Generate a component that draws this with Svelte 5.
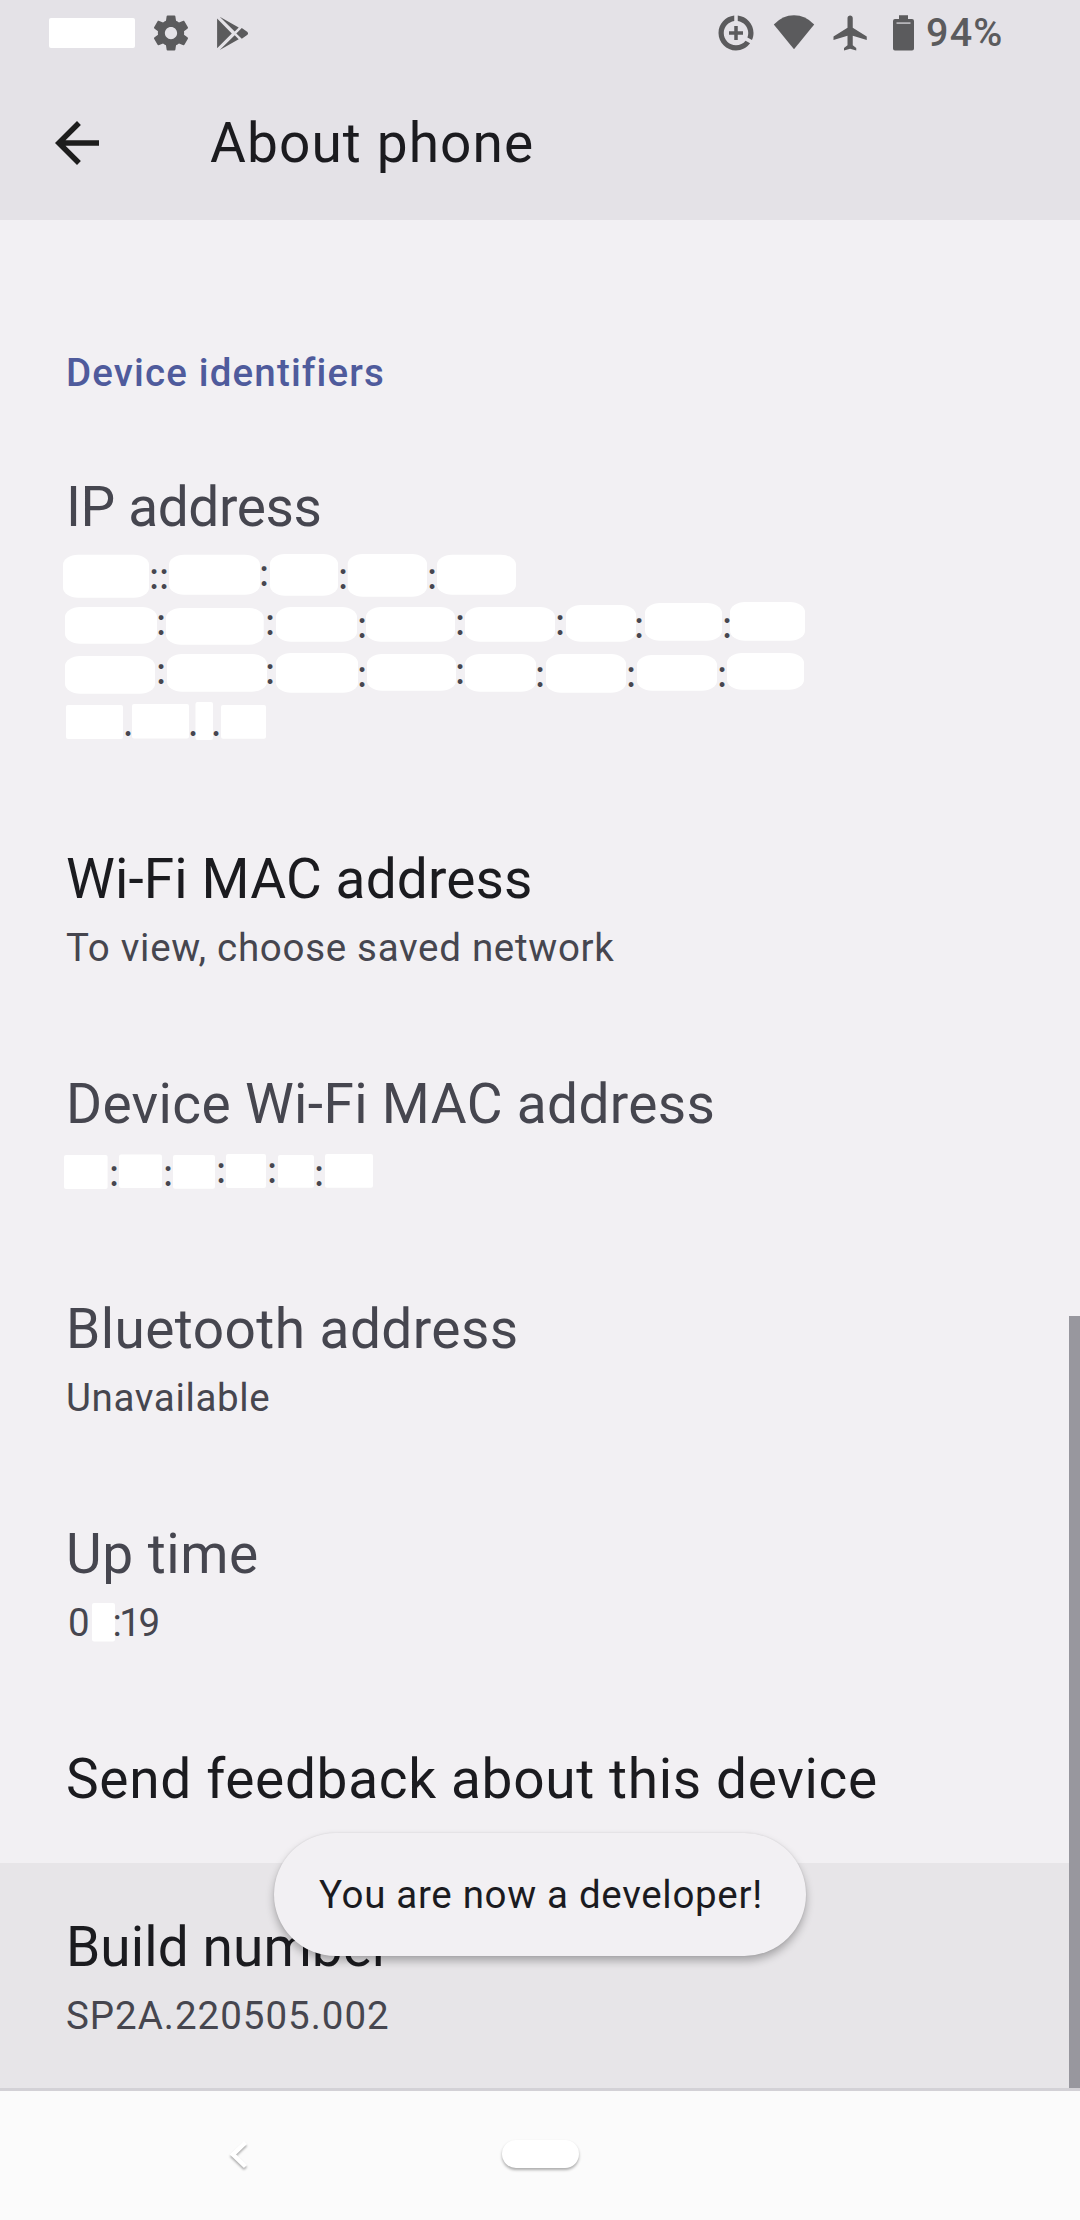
<script>
  // Masks are [x, y, width, height, rounded]; marks are [text, x, baseline],
  // both measured inside the summary area of their row.
  const ipMasks = [
    [63, 4.7, 86, 43, 1], [169, 4.7, 91, 40, 1], [270, 4, 68, 41.7, 1], [347.7, 4, 79.3, 42.7, 1], [437, 4.7, 79, 40, 1],
    [65, 57, 92, 36.7, 1], [166, 58, 97.7, 36.7, 1], [276, 57, 81, 34.7, 1], [366, 57, 89, 34.7, 1],
    [465, 57, 90, 34.7, 1], [566, 55, 70, 36.7, 1], [645, 53, 77, 37.7, 1], [730, 52, 75, 38.7, 1],
    [65, 106, 90, 37.7, 1], [167, 104, 100, 37.7, 1], [276, 103, 82, 39.7, 1], [367, 104, 89, 36.7, 1],
    [465, 104, 71, 37.7, 1], [546, 104, 80, 38.7, 1], [637, 105, 80, 35.7, 1], [727, 103, 77, 36.7, 1],
    [66, 155, 57, 34, 0], [132, 154, 57, 34.5, 0], [195.5, 152, 17.5, 38, 0], [221, 155, 45, 33.7, 0]
  ];
  const colons = (xs, low) => xs.map(([x, raised]) => [':', x, raised ? low - 3 : low]);
  const ipMarks = [
    ...colons([[154, 0], [164, 0], [264, 1], [343, 0], [432, 0]], 39),
    ...colons([[161, 1], [270, 1], [362, 0], [460, 1], [560, 1], [639, 0], [727, 0]], 88),
    ...colons([[161, 1], [270, 1], [362, 0], [460, 1], [540, 0], [631, 0], [722, 0]], 137),
    ['.', 128, 186], ['.', 193, 186], ['.', 216, 186]
  ];
  const macMasks = [
    [64, 8, 43.6, 34, 0], [119, 7.5, 43, 33.5, 0], [173, 8, 42, 33.7, 0],
    [226, 7, 40, 34, 0], [278, 8, 36, 32.7, 0], [325, 7, 48, 33.7, 0]
  ];
  const macMarks = colons([[114, 0], [168, 0], [221, 1], [272, 1], [319, 0]], 39);
  const timeMasks = [[92, 6, 23, 38.5, 0]];
  const timeMarks = [['0', 77.5, 39], [':19', 135, 39]];

  const rows = [
    { title: 'IP address', track: -0.38, muted: true, height: 196, masks: ipMasks, marks: ipMarks },
    { title: 'Wi-Fi MAC address', track: 0.13, summary: 'To view, choose saved network', sumTrack: 0.7 },
    { title: 'Device Wi-Fi MAC address', track: 0.35, muted: true, height: 49, masks: macMasks, marks: macMarks },
    { title: 'Bluetooth address', track: 0.43, muted: true, summary: 'Unavailable', sumTrack: 0.65 },
    { title: 'Up time', track: 0.53, muted: true, height: 49, masks: timeMasks, marks: timeMarks, digits: true },
    { title: 'Send feedback about this device', track: 0.66 },
    { title: 'Build number', track: 0.1, summary: 'SP2A.220505.002', sumTrack: 0.98, pressed: true }
  ];
</script>

<div class="screen">
  <header>
    <div class="status">
      <span class="clock-mask"></span>
      <svg class="gear" width="42" height="42" viewBox="0 0 24 24"><path d="M19.43 12.98c.04-.32.07-.64.07-.98s-.03-.66-.07-.98l2.11-1.65c.19-.15.24-.42.12-.64l-2-3.46c-.12-.22-.39-.3-.61-.22l-2.49 1c-.52-.4-1.08-.73-1.69-.98l-.38-2.65C14.46 2.18 14.25 2 14 2h-4c-.25 0-.46.18-.49.42l-.38 2.65c-.61.25-1.17.59-1.69.98l-2.49-1c-.23-.09-.49 0-.61.22l-2 3.46c-.13.22-.07.49.12.64l2.11 1.65c-.04.32-.07.65-.07.98s.03.66.07.98l-2.11 1.65c-.19.15-.24.42-.12.64l2 3.46c.12.22.39.3.61.22l2.49-1c.52.4 1.08.73 1.69.98l.38 2.65c.03.24.24.42.49.42h4c.25 0 .46-.18.49-.42l.38-2.65c.61-.25 1.17-.59 1.69-.98l2.49 1c.23.09.49 0 .61-.22l2-3.46c.12-.22.07-.49-.12-.64l-2.11-1.65zM12 15.5c-1.93 0-3.5-1.57-3.5-3.5s1.57-3.5 3.5-3.5 3.5 1.57 3.5 3.5-1.57 3.5-3.5 3.5z" /></svg>
      <svg class="play" width="42" height="42" viewBox="0 0 42 42"><path d="M6.1 6.6v29.6L20.8 21.4zM8.7 4.7l19 10.9-4 4zM8.7 38.1l19-10.9-4-4zM25.3 21.4l5.5-5.4 5.7 4q1.2 1.4 0 2.8l-5.7 4z" /></svg>
      <span class="spacer"></span>
      <svg width="42" height="42" viewBox="0 0 24 24"><path d="M13 2.05v3.03c3.39.49 6 3.39 6 6.92 0 .9-.18 1.75-.48 2.54l2.6 1.53c.56-1.24.88-2.62.88-4.07 0-5.18-3.95-9.45-9-9.95zM12 19c-3.87 0-7-3.13-7-7 0-3.53 2.61-6.43 6-6.92V2.05c-5.06.5-9 4.76-9 9.95 0 5.52 4.47 10 9.99 10 3.31 0 6.24-1.61 8.06-4.09l-2.6-1.53C16.17 17.98 14.21 19 12 19zM13 8h-2v3H8v2h3v3h2v-3h3v-2h-3z" /></svg>
      <svg class="wifi" width="42" height="42" viewBox="0 0 42 42"><path d="M.8 12.4Q9.6 3.2 21 3.2T41.2 12.4L21 37.3z" /></svg>
      <svg class="plane" width="42" height="42" viewBox="0 0 24 24"><path d="M21 16v-2l-8-5V3.5c0-.83-.67-1.5-1.5-1.5S10 2.67 10 3.5V9l-8 5v2l8-2.5V19l-2 1.5V22l3.5-1 3.5 1v-1.5L13 19v-5.5l8 2.5z" /></svg>
      <svg class="battery" width="21" height="42" viewBox="0 0 21 42"><path d="M6 3.3h9V7h4q2 0 2 2v27.500q0 2-2 2H2q-2 0-2-2V9q0-2 2-2h4z" /><path class="level" d="M3.500 10.200h14v1.800h-14z" /></svg>
      <span class="percent">94%</span>
    </div>
    <div class="toolbar">
      <svg width="66" height="66" viewBox="0 0 24 24"><path d="M20 11H7.830l5.590-5.590L12 4l-8 8 8 8 1.410-1.410L7.830 13H20v-2z" /></svg>
      <h1>About phone</h1>
    </div>
  </header>

  <main>
    <h2>Device identifiers</h2>
    {#each rows as row}
      <section class:pressed={row.pressed} class:single={!row.summary && !row.masks}>
        <h3 class:muted={row.muted} style:letter-spacing="{row.track}px">{row.title}</h3>
        {#if row.masks}
          <svg class="masked" class:digits={row.digits} width="1000" height={row.height} viewBox="0 0 1000 {row.height}">
            {#each row.masks as [x, y, width, height, round]}
              <rect {x} {y} {width} {height} rx={round ? 15 : 2} ry={round ? 10 : 2} />
            {/each}
            {#each row.marks as [text, x, y]}
              <text {x} {y}>{text}</text>
            {/each}
          </svg>
        {:else if row.summary}
          <p style:letter-spacing="{row.sumTrack}px">{row.summary}</p>
        {/if}
      </section>
    {/each}
    <div class="scrollbar"></div>
    <div class="toast">You are now a developer!</div>
  </main>

  <nav>
    <svg class="back" width="30" height="40" viewBox="0 0 30 40"><path d="M21.500 7.500L9 19.500l12.500 12" /></svg>
    <span class="home"></span>
  </nav>
</div>

<style>
  :global(body) { margin: 0; }
  .screen {
    width: 1080px;
    height: 2220px;
    display: flex;
    flex-direction: column;
    overflow: hidden;
    background: #f2f0f3;
    color: #1b1b1f;
    font-family: Roboto, "Open Sans", sans-serif;
  }
  svg { display: block; flex: none; }
  h1, h2, h3, p { margin: 0; font-weight: 400; white-space: nowrap; }
  header { height: 220px; background: #e4e2e7; }
  .status {
    height: 66px;
    display: flex;
    align-items: center;
    padding: 0 78px 0 49px;
    fill: #5b5b5d;
    color: #5b5b5d;
  }
  .clock-mask { width: 86px; height: 30px; margin-right: 15px; background: #fff; border-radius: 2px; }
  .play { margin-left: 19px; }
  .spacer { flex: 1; }
  .wifi { margin-left: 16px; }
  .plane { margin-left: 15px; }
  .battery { margin-left: 21px; }
  .level { fill: #b5b4b8; }
  .percent {
    width: 76px;
    margin-left: 12px;
    font-size: 39.5px;
    font-weight: 500;
    line-height: 46px;
    letter-spacing: 1.2px;
  }
  .toolbar { height: 154px; display: flex; align-items: center; padding-left: 44px; }
  .toolbar svg { fill: #1d1d1d; }
  h1 { margin-left: 100px; font-size: 55px; line-height: 66px; letter-spacing: 1.1px; }
  main { position: relative; height: 1868px; border-bottom: 3px solid #d3d1d6; }
  h2 {
    height: 75px;
    padding: 128px 66px 0;
    color: #4f5b9c;
    font-size: 38.5px;
    font-weight: 500;
    line-height: 49px;
    letter-spacing: 1.15px;
  }
  section { padding: 45px 0 49px; }
  section.single { padding-bottom: 44px; }
  section.pressed { background: #e7e5e8; }
  h3 { padding-left: 66px; font-size: 55px; line-height: 79px; }
  .muted { color: #46464f; }
  p { margin: 4px 0 -1px; padding-left: 66px; color: #46464f; font-size: 38.5px; line-height: 49px; }
  .masked { margin-top: 3px; }
  .masked text { fill: #46464f; font-family: Lato, sans-serif; font-size: 38.5px; text-anchor: middle; }
  .masked.digits text { font-family: Roboto, sans-serif; letter-spacing: -2.5px; }
  .masked rect { fill: #fff; }
  .scrollbar { position: absolute; right: 0; bottom: 0; width: 11px; height: 772px; background: #98979e; }
  .toast {
    position: absolute;
    left: 274px;
    bottom: 132px;
    width: 487px;
    height: 123px;
    padding-left: 45px;
    border-radius: 62px;
    background: #f2f0f3;
    box-shadow: 0 5px 9px rgba(0, 0, 0, 0.28), 0 0 2px rgba(0, 0, 0, 0.1);
    font-size: 38.5px;
    line-height: 123px;
    letter-spacing: 0.68px;
    white-space: nowrap;
  }
  nav { height: 129px; display: flex; background: #fbfbfb; }
  .back {
    margin: 44px 0 0 224px;
    fill: none;
    stroke: #fff;
    stroke-width: 4.5px;
    filter: drop-shadow(0 2px 1px rgba(0, 0, 0, 0.32));
  }
  .home {
    width: 77px;
    height: 28px;
    margin: 49px 0 0 248px;
    border-radius: 14px;
    background: #fff;
    box-shadow: 0 2px 3px rgba(0, 0, 0, 0.32);
  }
</style>
